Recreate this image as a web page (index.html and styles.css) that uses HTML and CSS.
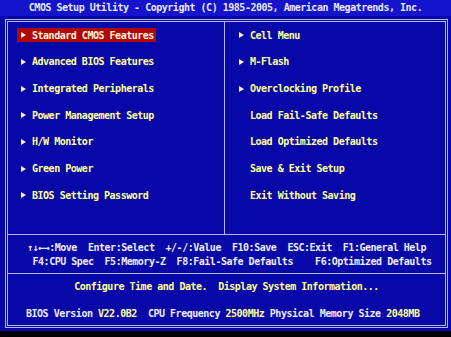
FILE: index.html
```html
<!DOCTYPE html>
<html lang="en">
<head>
    <meta charset="UTF-8">
    <meta name="viewport" content="width=device-width, initial-scale=1.0">
    <title>CMOS Setup Utility</title>
    <link rel="stylesheet" href="styles.css">
</head>
<body>
    <div class="title">CMOS Setup Utility - Copyright (C) 1985-2005, American Megatrends, Inc.</div>

    <div class="frame">
        <div class="menus">
            <ul class="col left">
                <li class="item sub active">Standard CMOS Features</li>
                <li class="item sub">Advanced BIOS Features</li>
                <li class="item sub">Integrated Peripherals</li>
                <li class="item sub">Power Management Setup</li>
                <li class="item sub">H/W Monitor</li>
                <li class="item sub">Green Power</li>
                <li class="item sub">BIOS Setting Password</li>
            </ul>
            <ul class="col right">
                <li class="item sub">Cell Menu</li>
                <li class="item sub">M-Flash</li>
                <li class="item sub">Overclocking Profile</li>
                <li class="item">Load Fail-Safe Defaults</li>
                <li class="item">Load Optimized Defaults</li>
                <li class="item">Save &amp; Exit Setup</li>
                <li class="item">Exit Without Saving</li>
            </ul>
        </div>

        <div class="keys">
            <div class="line">↑↓←→:Move  Enter:Select  +/-/:Value  F10:Save  ESC:Exit  F1:General Help</div>
            <div class="line"> F4:CPU Spec  F5:Memory-Z  F8:Fail-Safe Defaults    F6:Optimized Defaults</div>
        </div>

        <div class="status">
            <div class="hint">Configure Time and Date.  Display System Information...</div>
            <div class="info">BIOS Version <b>V22.0B2</b>  CPU Frequency <b>2500MHz</b> Physical Memory Size <b>2048MB</b></div>
        </div>
    </div>

    <div class="floor"></div>
</body>
</html>
```

FILE: styles.css
```css
body {
    margin: 0;
    width: 451px;
    height: 337px;
    overflow: hidden;
    background: #0808a8;
    font-family: "DejaVu Sans Mono", "Liberation Mono", monospace;
    font-size: 10px;
    font-weight: bold;
    letter-spacing: -0.48px;
    color: #ececf4;
}
.title,
.item,
.line,
.hint,
.info {
    white-space: pre;
}
.title {
    height: 16px;
    line-height: 16px;
    text-align: center;
    background: #1414cc;
    color: #e8e8f0;
}
.frame {
    margin: 3px 3px 0 5px;
    height: 303px;
    border: 3px double #b4b4e8;
    display: flex;
    flex-direction: column;
}
.menus {
    display: flex;
    height: 212px;
    flex-shrink: 0;
    border-bottom: 1px solid #b4b4e8;
}
.col {
    list-style: none;
    margin: 0;
    padding: 0;
    display: flex;
    flex-direction: column;
}
.col.left {
    width: 217px;
    padding-left: 9px;
    box-sizing: border-box;
    border-right: 1px solid #b4b4e8;
}
.col.right {
    flex: 1;
    padding-left: 10px;
}
.item {
    height: 26.67px;
    display: flex;
    align-items: center;
    color: #ffff9a;
}
.item::before {
    content: "";
    width: 0;
    height: 0;
    margin: 0 6px 0 4px;
    border-left: 5px solid transparent;
    border-top: 3px solid transparent;
    border-bottom: 3px solid transparent;
}
.item.sub::before {
    border-left-color: #f4f4d8;
}
.item.active {
    align-self: flex-start;
    height: 14px;
    margin: 6px 0 6.67px;
    padding-right: 2px;
    background: #b00808;
    color: #fff4dc;
}
.keys {
    height: 39px;
    flex-shrink: 0;
    padding: 6px 0 0 19px;
    box-sizing: border-box;
    border-bottom: 1px solid #b4b4e8;
}
.line {
    height: 14px;
    line-height: 14px;
}
.status {
    flex: 1;
    padding-top: 6px;
}
.hint {
    height: 14px;
    line-height: 14px;
    text-align: center;
    color: #ffff9a;
}
.info {
    margin-top: 13px;
    height: 14px;
    line-height: 14px;
    padding-left: 18px;
}
.info b {
    color: #ffff9a;
}
.floor {
    margin-top: 3px;
    height: 10px;
    background: #000;
}
```
